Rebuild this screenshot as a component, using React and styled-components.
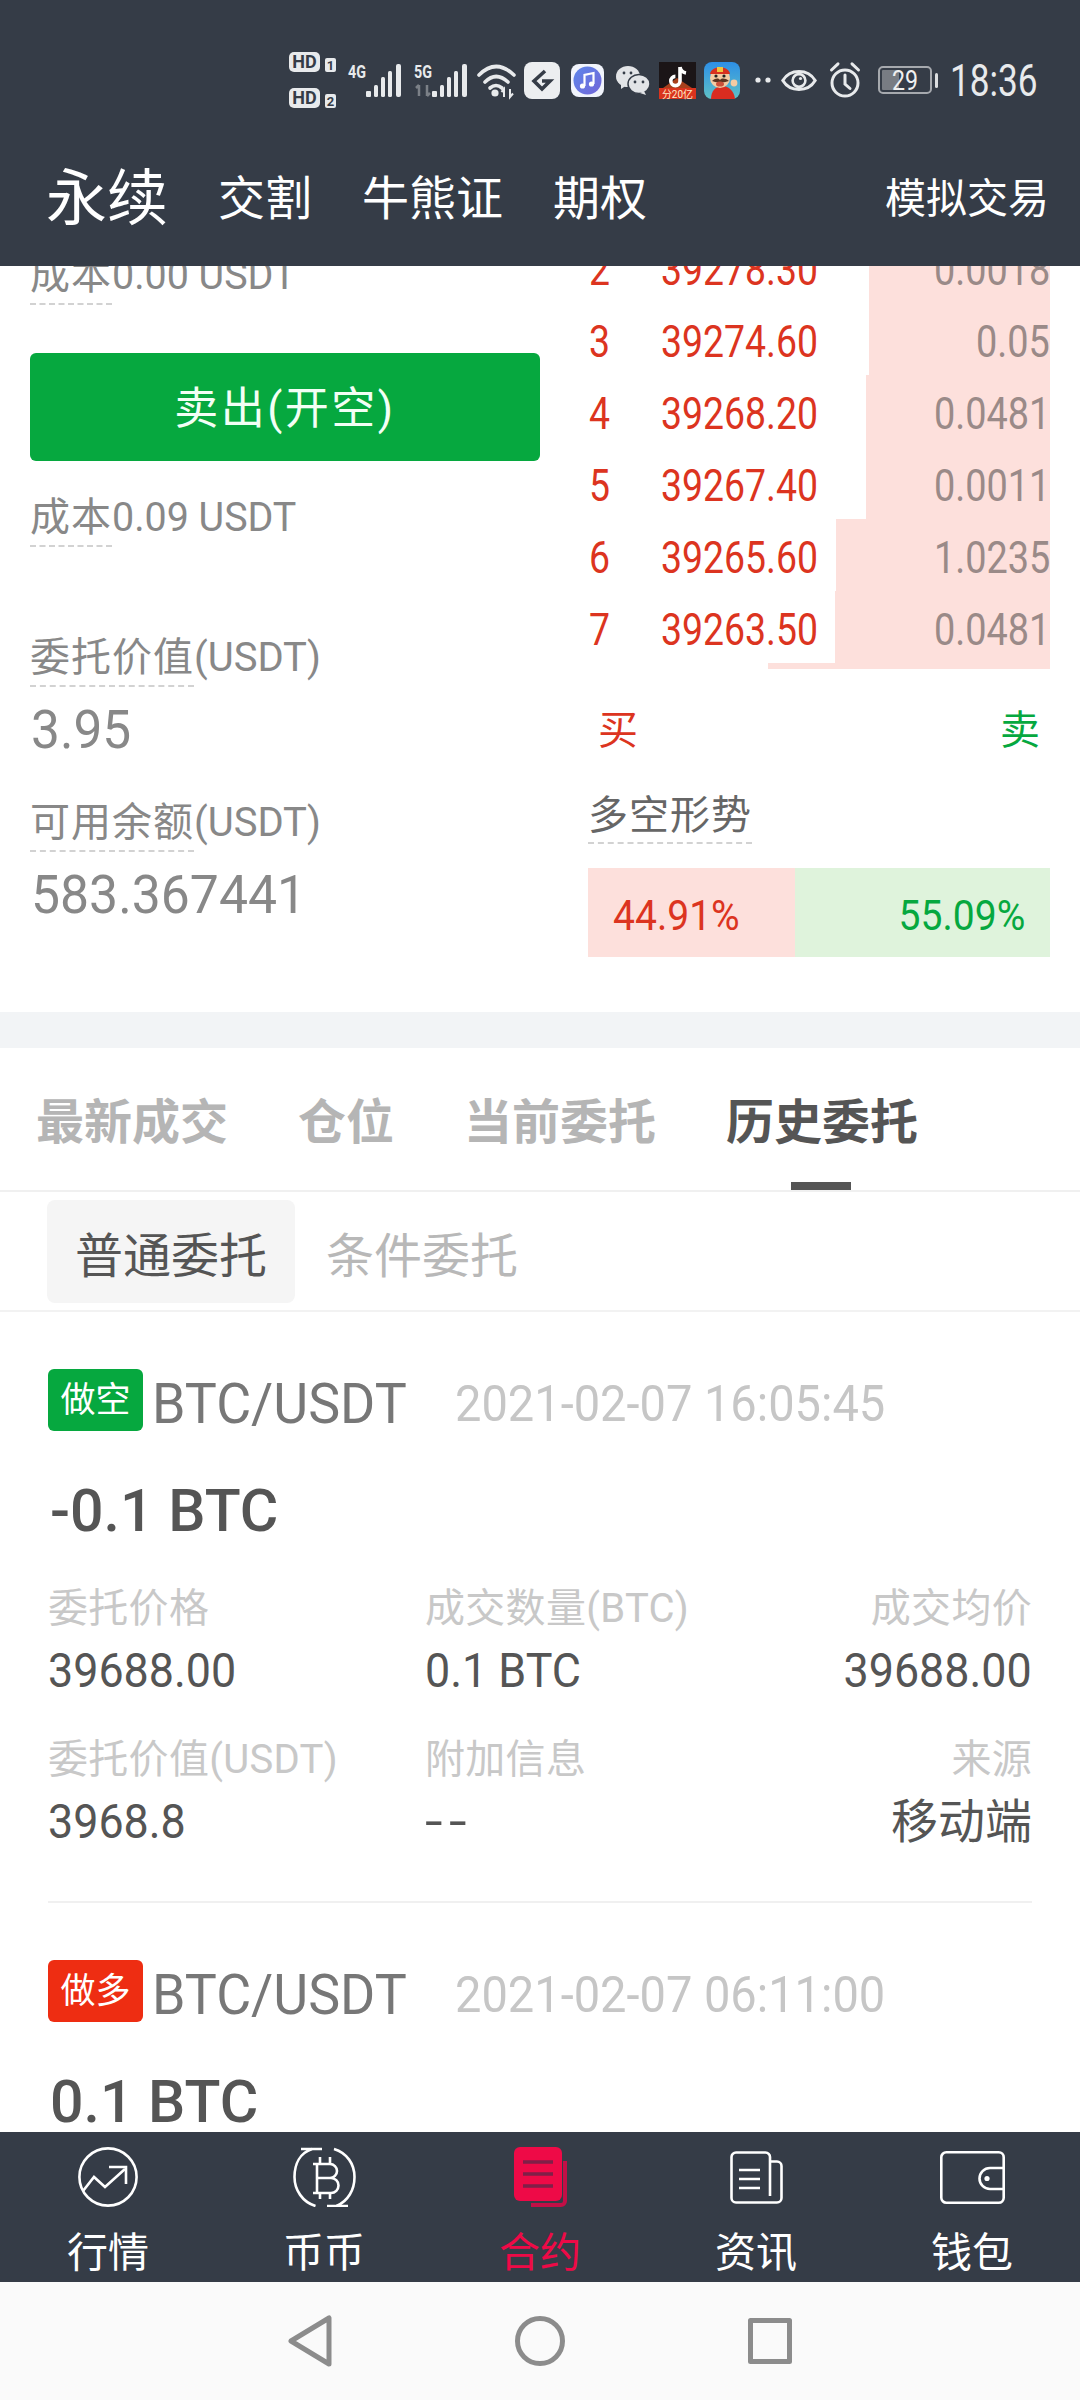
import React from "react";
import styled, { createGlobalStyle } from "styled-components";

const NUM = `"Roboto", "Noto Sans CJK SC", sans-serif`;
const DARK = "#353c47";
const RED = "#dc3420";
const GREEN = "#06a83f";
const PINK = "#fde0dc";

const Global = createGlobalStyle`
  html, body { margin: 0; padding: 0; background: #fff; }
  * { box-sizing: border-box; }
  body { font-family: ${NUM}; }
`;

const Page = styled.div`
  width: 1080px; height: 2400px; display: flex; flex-direction: column; overflow: hidden; background: #fff;
`;
const Header = styled.header`
  flex: 0 0 266px; background: ${DARK}; display: flex; flex-direction: column;
`;
const StatusBar = styled.div`
  flex: 0 0 160px; display: flex; align-items: center; justify-content: flex-end; padding-right: 42px; color: #e8eaec;
`;
const SBIcon = styled.svg`
  flex: none; display: block; overflow: visible; margin-left: ${p => p.$ml || 0}px;
  text { font-family: ${NUM}; }
`;
const Clock = styled.span`
  flex: 0 0 110px; margin: 2px -22px 0 12px; font-size: 44px; line-height: 44px; color: #e8eaec;
  transform: scaleX(.8); transform-origin: left center;
`;
const Cond = styled.span`
  display: inline-block; white-space: nowrap; transform: scaleX(${p => p.$s}); transform-origin: ${p => p.$end ? "right" : "left"} center;
`;
const TopNav = styled.nav`
  flex: 1; display: flex; align-items: center; gap: 50px; padding: 0 31px 29px 46px; color: #fff;
`;
const TopItem = styled.span`
  font-size: ${p => (p.$main ? 61 : 47)}px; line-height: 66px; white-space: nowrap;
`;
const TopRight = styled.span`
  margin-left: auto; font-size: 41px; line-height: 50px;
`;

const Scroller = styled.main`
  flex: 0 0 1866px; overflow: hidden;
`;
const Trade = styled.section`
  margin-top: -35px; display: grid; grid-template-columns: 510px 462px; column-gap: 48px; padding: 0 30px 55px;
`;
const LeftCol = styled.div`
  display: flex; flex-direction: column; align-items: flex-start; padding-top: 17px; color: #888;
`;
const Cost = styled.div`
  font-size: 40px; line-height: 56px; height: 57px; margin-top: ${p => p.$mt || 0}px; white-space: nowrap;
`;
const Dashed = styled.span`
  display: inline-block; height: 57px; border-bottom: 2px dashed #d2d2d2; letter-spacing: ${p => p.$ls || 0}px;
`;
const SellButton = styled.button`
  width: 510px; height: 108px; margin-top: 48px; border: 0; border-radius: 6px; background: ${GREEN}; color: #f2fff5;
  font: 44px/104px ${NUM}; padding: 4px 0 0; letter-spacing: 2.5px;
`;
const Metric = styled.div`
  font-size: 53px; line-height: 60px; margin-top: 13px; color: #888; padding-left: 1px;
`;
const RightCol = styled.div`
  display: flex; flex-direction: column; align-items: stretch;
`;
const Book = styled.div`
  height: 438px; overflow: hidden;
`;
const BookRow = styled.div`
  position: relative; height: 72px; padding-top: 6px; display: flex; align-items: center; font-size: 44px; line-height: 66px; color: ${RED};
`;
const Depth = styled.i`
  position: absolute; top: 0; right: 0; bottom: 0; background: ${PINK};
`;
const Idx = styled.span`
  position: relative; flex: 0 0 73px; padding-left: 1px;
`;
const Qty = styled.span`
  position: relative; margin-left: auto; color: #9a8a88;
`;
const Price = styled.span`position: relative;`;
const BuySell = styled.div`
  margin-top: 34px; height: 60px; display: flex; justify-content: space-between; padding: 0 10px; font-size: 40px; line-height: 56px;
`;
const BSLabel = styled.span`color: ${p => (p.$sell ? GREEN : RED)};`;
const Trend = styled.div`
  margin-top: 24px; height: 57px; font-size: 40px; line-height: 58px; color: #666;
`;
const Ratio = styled.div`
  margin-top: 24px; height: 89px; display: flex; font-size: 42px; line-height: 95px;
`;
const RatioBuy = styled.div`
  flex: 0 0 207px; background: ${PINK}; color: ${RED}; padding-left: 25px;
`;
const RatioSell = styled.div`
  flex: 1; background: #dff3dc; color: ${GREEN}; text-align: right; padding-right: 25px;
`;
const Gap = styled.div`height: 36px; background: #f2f4f6;`;
const Tabs = styled.div`
  height: 144px; display: flex; gap: 70px; padding: 51px 0 0 36px; border-bottom: 2px solid #f0f0f0;
`;
const Tab = styled.div`
  position: relative; height: 91px; font-size: 48px; line-height: 48px; font-weight: 700; color: ${p => (p.$on ? "#555" : "#b5b5b5")}; white-space: nowrap;
`;
const TabMark = styled.i`
  position: absolute; left: 50%; margin-left: -31px; bottom: 0; width: 60px; height: 8px; background: #555;
`;
const SubTabs = styled.div`
  height: 120px; display: flex; gap: 3px; align-items: center; padding-left: 47px; border-bottom: 2px solid #f2f2f2;
`;
const SubTab = styled.div`
  height: 103px; padding: 10px 28px 0; border-radius: 8px; font-size: 48px; line-height: 93px;
  background: ${p => (p.$on ? "#f5f5f5" : "transparent")}; color: ${p => (p.$on ? "#555" : "#b8b8b8")};
`;
const Card = styled.article`
  margin: 0 48px; padding: 57px 0 55px; border-bottom: ${p => (p.$last ? "0" : "2px solid #f0f0f0")};
`;
const CardHead = styled.div`display: flex; align-items: flex-start; height: 62px;`;
const Badge = styled.span`
  flex: 0 0 95px; height: 62px; border-radius: 6px; background: ${p => p.$c}; color: #fff; font-size: 35px; line-height: 63px; text-align: center;
`;
const Pair = styled.span`
  flex: 0 0 253px; margin-left: 9px; font-size: 56px; line-height: 70px; color: #777;
`;
const Stamp = styled.span`
  margin-left: 38px; font-size: 50px; line-height: 70px; color: #c6c6c6;
`;
const Amount = styled.div`
  margin-top: 45px; font-size: 59px; line-height: 70px; font-weight: 500; color: #555; padding-left: 2px;
`;
const Fields = styled.div`
  display: grid; grid-template-columns: 377px 306px 1fr; row-gap: 40px; margin-top: 38px;
`;
const Field = styled.div`text-align: ${p => (p.$end ? "right" : "left")};`;
const FLabel = styled.div`
  font-size: 40px; line-height: 50px; height: 48px; color: #c8c8c8; letter-spacing: .3px; white-space: nowrap;
`;
const FValue = styled.div`
  margin-top: 15px; font-size: 49px; line-height: 48px; color: #555; white-space: nowrap;
`;
const FCn = styled.span`font-size: 47px;`;
const Dash = styled.span`letter-spacing: 5px; display: inline-block; transform: scaleX(1.3); transform-origin: left center;`;

const TabBar = styled.nav`
  flex: 0 0 150px; background: ${DARK}; display: flex;
`;
const TabItem = styled.div`
  flex: 1; display: flex; flex-direction: column; align-items: center; color: ${p => (p.$on ? "#ee0a47" : "#fff")};
`;
const IconBox = styled.div`
  height: 60px; margin-top: 15px; display: flex; align-items: center; justify-content: center;
`;
const TabIcon = styled.svg`display: block; flex: none;`;
const TabText = styled.span`
  margin-top: 21px; font-size: 41px; line-height: 50px;
`;
const SysNav = styled.div`
  flex: 0 0 118px; background: #fafafa; display: flex; justify-content: center; align-items: center; gap: 183px;
`;

const L = "#e8eaec";

const Sim = () => (
  <SBIcon width="48" height="56" viewBox="0 0 48 56">
    <rect x="0" y="0" width="31" height="20" rx="5" fill={L} />
    <text x="15.5" y="16" textAnchor="middle" fontSize="18" fontWeight="700" fill={DARK}>HD</text>
    <rect x="36" y="6" width="11" height="14" rx="2" fill={L} />
    <text x="41.5" y="18" textAnchor="middle" fontSize="13" fontWeight="700" fill={DARK}>1</text>
    <rect x="0" y="36" width="31" height="20" rx="5" fill={L} />
    <text x="15.5" y="52" textAnchor="middle" fontSize="18" fontWeight="700" fill={DARK}>HD</text>
    <rect x="36" y="42" width="11" height="14" rx="2" fill={L} />
    <text x="41.5" y="54" textAnchor="middle" fontSize="13" fontWeight="700" fill={DARK}>2</text>
  </SBIcon>
);
const Bars = () => (
  <g fill={L}>
    <rect x="0" y="27" width="5" height="6" rx="1" />
    <rect x="8" y="21" width="4" height="12" rx="1.5" />
    <rect x="15" y="13" width="4" height="20" rx="1.5" />
    <rect x="22" y="7" width="4" height="26" rx="1.5" />
    <rect x="30" y="0" width="5" height="33" rx="2" />
  </g>
);
const Signal = ({ label, ml, arrows }) => (
  <SBIcon $ml={ml} width="54" height="34" viewBox="0 0 54 34">
    <text x="0" y="15" fontSize="18" fontWeight="700" fill={L} textLength="18" lengthAdjust="spacingAndGlyphs">{label}</text>
    {arrows && <path d="M5 33V22M2 25l3-3M13 22v11M13 33l3-3" stroke="#7b8087" strokeWidth="2.5" fill="none" />}
    <g transform="translate(18 1)"><Bars /></g>
  </SBIcon>
);
const Wifi = () => (
  <SBIcon $ml={9} width="39" height="35" viewBox="0 0 39 35">
    <g fill="none" stroke={L} strokeWidth="3.6" strokeLinecap="round">
      <path d="M2 12Q19-5 37 12" />
      <path d="M8 19Q19 8 31 19" />
      <path d="M13 25Q19 20 25 25" />
    </g>
    <circle cx="18" cy="30" r="3.6" fill={L} />
    <path d="M27 34V26l-2.5 3M33 26v8l3-3.5" stroke={L} strokeWidth="2" fill="none" />
  </SBIcon>
);
const GApp = () => (
  <SBIcon $ml={8} width="36" height="37" viewBox="0 0 36 37">
    <rect width="36" height="37" rx="8" fill="#eceef0" />
    <path d="M21 9L10 19l8 8 8-8h-8" fill="none" stroke={DARK} strokeWidth="3.6" />
  </SBIcon>
);
const Music = () => (
  <SBIcon $ml={11} width="33" height="33" viewBox="0 0 33 33">
    <defs>
      <linearGradient id="mus" x1="0" y1="0" x2="1" y2="1">
        <stop offset="0" stopColor="#5d86ea" /><stop offset="1" stopColor="#7266d8" />
      </linearGradient>
    </defs>
    <rect width="33" height="33" rx="8" fill="#f1f4fc" />
    <circle cx="16.5" cy="16.5" r="14" fill="url(#mus)" />
    <path d="M13.5 22V11l9-2v11" fill="none" stroke="#fff" strokeWidth="2.2" />
    <circle cx="11.5" cy="22" r="2.6" fill="#fff" /><circle cx="20.5" cy="20" r="2.6" fill="#fff" />
  </SBIcon>
);
const WeChat = () => (
  <SBIcon $ml={12} width="34" height="29" viewBox="0 0 34 29">
    <ellipse cx="12" cy="10.5" rx="12" ry="10.5" fill="#e2e4e7" />
    <path d="M5 17l0 6 6-4z" fill="#e2e4e7" />
    <ellipse cx="23" cy="18" rx="11" ry="9.5" fill="#e2e4e7" stroke={DARK} strokeWidth="1.5" />
    <path d="M28 25l2 4-6-2z" fill="#e2e4e7" />
    <circle cx="8" cy="7" r="1.4" fill={DARK} /><circle cx="15" cy="7" r="1.4" fill={DARK} />
    <circle cx="19" cy="16" r="1.4" fill={DARK} /><circle cx="27" cy="16" r="1.4" fill={DARK} />
  </SBIcon>
);
const TikTok = () => (
  <SBIcon $ml={9} width="37" height="37" viewBox="0 0 37 37">
    <rect width="37" height="37" fill="#1b1517" />
    <polygon points="4,26 18,16 33,26" fill="#a8401c" />
    <rect y="26" width="37" height="11" fill="#d9331d" />
    <path d="M21 5v14a4.6 4.6 0 1 1-4.6-4.6M21 5c.6 3.5 3 5.500 6 6" fill="none" stroke="#fff" strokeWidth="3.6" />
    <text x="18.5" y="35.500" textAnchor="middle" fontSize="10" fill="#ffe9c8">分20亿</text>
  </SBIcon>
);
const Game = () => (
  <SBIcon $ml={8} width="36" height="37" viewBox="0 0 36 37">
    <defs>
      <linearGradient id="gm" x1="0" y1="0" x2="0" y2="1">
        <stop offset="0" stopColor="#2d8fe6" /><stop offset="1" stopColor="#5fc1c6" />
      </linearGradient>
    </defs>
    <rect width="36" height="37" rx="8" fill="url(#gm)" />
    <path d="M7 37c0-8 5-13 11-13s12 4 13 13z" fill="#d92c20" />
    <ellipse cx="16" cy="16" rx="10" ry="10" fill="#f4cba3" />
    <path d="M6 12C7 3 25 3 26 12z" fill="#d8301f" />
    <rect x="13" y="5" width="6" height="5" fill="#f2c33d" />
    <path d="M8 19c4-3 6-3 8-1 2-2 5-2 9 1-4 1-6 2-9 1-2 1-5 0-8-1z" fill="#5b3320" />
    <ellipse cx="16" cy="22" rx="4" ry="2.600" fill="#c9503a" />
    <circle cx="12" cy="14" r="1.6" fill="#222" /><circle cx="20" cy="14" r="1.6" fill="#222" />
    <circle cx="30" cy="21" r="3.4" fill="#f4cba3" />
  </SBIcon>
);
const Dots = () => (
  <SBIcon $ml={15} width="16" height="6" viewBox="0 0 16 6">
    <circle cx="3" cy="3" r="2.6" fill={L} /><circle cx="13" cy="3" r="2.6" fill={L} />
  </SBIcon>
);
const Eye = () => (
  <SBIcon $ml={10} width="36" height="27" viewBox="0 0 36 27">
    <path d="M1.800 13.500C9 1.500 27 1.500 34.200 13.500 27 25.500 9 25.500 1.800 13.500Z" fill="none" stroke={L} strokeWidth="3" />
    <circle cx="18" cy="13.500" r="6.400" fill="none" stroke={L} strokeWidth="2.600" />
    <circle cx="19.500" cy="11.500" r="1.600" fill={L} />
  </SBIcon>
);
const Alarm = () => (
  <SBIcon $ml={12} width="32" height="36" viewBox="0 0 32 36">
    <g fill="none" stroke={L} strokeWidth="3" strokeLinecap="round">
      <circle cx="16" cy="21" r="13" />
      <path d="M16 13v9l5 4.500" />
      <path d="M2.500 8L9 1.800M29.500 8L23 1.800" />
    </g>
  </SBIcon>
);
const Battery = () => (
  <SBIcon $ml={17} width="60" height="28" viewBox="0 0 60 28">
    <rect x="1" y="1" width="52" height="26" rx="4" fill="none" stroke="#a6a9ae" strokeWidth="2" />
    <rect x="4" y="4" width="17" height="20" rx="1" fill="#787c83" />
    <text x="27" y="24" textAnchor="middle" fontSize="28" fill="#f0f0f0" textLength="26" lengthAdjust="spacingAndGlyphs">29</text>
    <rect x="57" y="7" width="3" height="15" rx="1.500" fill="#dcdee0" />
  </SBIcon>
);

const IcTrend = () => (
  <TabIcon width="60" height="60" viewBox="0 0 60 60" fill="none" stroke="#fff" strokeWidth="2.6">
    <circle cx="30" cy="30" r="28.600" />
    <path d="M5 44l11-14 11 10 20-18" />
    <path d="M31 20h17v17" />
  </TabIcon>
);
const IcCoin = () => (
  <TabIcon width="63" height="60" viewBox="0 0 63 60" fill="none" stroke="#fff" strokeWidth="2.6">
    <path d="M19 2C7 6 1.500 17 1.500 30c0 13 8 25 21 29" />
    <path d="M41 2c13 4 20.500 15 20.500 28 0 13-6.500 24-18 29" />
    <path d="M8 2h21M34 59h21" />
    <path d="M20 17h17a7 7 0 0 1 0 14H24M24 17v28M24 31h14a7.500 7.500 0 0 1 0 15H20" />
    <path d="M27 10v7M37 10v7M27 46v6M37 46v6" />
  </TabIcon>
);
const IcContract = () => (
  <TabIcon width="53" height="60" viewBox="0 0 53 60" fill="none">
    <path d="M51 14v40a4 4 0 0 1-4 4H17" stroke="#c20f46" strokeWidth="4" />
    <rect width="48" height="54" rx="6" fill="#ee0a47" />
    <path d="M9 15h30M9 27h30M9 39h30" stroke="#7f1f48" strokeWidth="3.400" />
  </TabIcon>
);
const IcNews = () => (
  <TabIcon width="53" height="53" viewBox="0 0 53 53" fill="none" stroke="#fff" strokeWidth="2.6">
    <path d="M40 45V6a4.500 4.500 0 0 0-4.500-4.500H6A4.500 4.500 0 0 0 1.500 6v41A4.500 4.500 0 0 0 6 51.500h41a4.500 4.500 0 0 0 4.500-4.500V15a4.500 4.500 0 0 0-4.500-4.500h-7" />
    <path d="M9 19h21M9 28h21M9 37h21" />
  </TabIcon>
);
const IcWallet = () => (
  <TabIcon width="65" height="53" viewBox="0 0 65 53" fill="none" stroke="#fff" strokeWidth="2.6">
    <rect x="1.300" y="1.300" width="62.400" height="50.400" rx="5" />
    <path d="M64 17H50a10.500 10.500 0 0 0 0 21h14" />
    <circle cx="47" cy="27.500" r="2.600" fill="#fff" stroke="none" />
  </TabIcon>
);

const book = [
  ["2", "39278.30", "0.0018", 181],
  ["3", "39274.60", "0.05", 181],
  ["4", "39268.20", "0.0481", 184],
  ["5", "39267.40", "0.0011", 184],
  ["6", "39265.60", "1.0235", 214],
  ["7", "39263.50", "0.0481", 215],
  ["", "", "", 282],
];
const tabs = [
  ["行情", <IcTrend key="a" />],
  ["币币", <IcCoin key="b" />],
  ["合约", <IcContract key="c" />, true],
  ["资讯", <IcNews key="d" />],
  ["钱包", <IcWallet key="e" />],
];

const renderValue = (v, cn, end) => {
  if (cn) return <FCn>{v}</FCn>;
  if (v === "--") return <Dash>{v}</Dash>;
  return <Cond $s={0.915} $end={end}>{v}</Cond>;
};

const Order = ({ tag, color, time, amount, last, fields }) => (
  <Card $last={last}>
    <CardHead>
      <Badge $c={color}>{tag}</Badge>
      <Pair><Cond $s={0.96}>BTC/USDT</Cond></Pair>
      <Stamp><Cond $s={0.94}>{time}</Cond></Stamp>
    </CardHead>
    <Amount>{amount}</Amount>
    {fields && (
      <Fields>
        {fields.map(([l, v, cn], i) => (
          <Field key={l} $end={i % 3 === 2}>
            <FLabel>{l}</FLabel>
            <FValue>{renderValue(v, cn, i % 3 === 2)}</FValue>
          </Field>
        ))}
      </Fields>
    )}
  </Card>
);

export default function App() {
  return (
    <Page>
      <Global />
      <Header>
        <StatusBar>
          <Sim />
          <Signal label="4G" ml={11} />
          <Signal label="5G" ml={12} arrows />
          <Wifi /><GApp /><Music /><WeChat /><TikTok /><Game /><Dots /><Eye /><Alarm /><Battery />
          <Clock>18:36</Clock>
        </StatusBar>
        <TopNav>
          <TopItem $main>永续</TopItem>
          <TopItem>交割</TopItem>
          <TopItem>牛熊证</TopItem>
          <TopItem>期权</TopItem>
          <TopRight>模拟交易</TopRight>
        </TopNav>
      </Header>
      <Scroller>
        <Trade>
          <LeftCol>
            <Cost><Dashed $ls={1}>成本</Dashed><Cond $s={0.985}>0.00 USDT</Cond></Cost>
            <SellButton>卖出(开空)</SellButton>
            <Cost $mt={29}><Dashed $ls={1}>成本</Dashed><Cond $s={0.985}>0.09 USDT</Cond></Cost>
            <Cost $mt={83}><Dashed $ls={1}>委托价值</Dashed>(USDT)</Cost>
            <Metric><Cond $s={0.97}>3.95</Cond></Metric>
            <Cost $mt={35}><Dashed $ls={1}>可用余额</Dashed>(USDT)</Cost>
            <Metric><Cond $s={0.975}>583.367441</Cond></Metric>
          </LeftCol>
          <RightCol>
            <Book>
              {book.map(([n, p, q, w], i) => (
                <BookRow key={i}>
                  <Depth style={{ width: w }} />
                  <Idx><Cond $s={0.85}>{n}</Cond></Idx>
                  <Price><Cond $s={0.85}>{p}</Cond></Price>
                  <Qty><Cond $s={0.86} $end>{q}</Cond></Qty>
                </BookRow>
              ))}
            </Book>
            <BuySell><BSLabel>买</BSLabel><BSLabel $sell>卖</BSLabel></BuySell>
            <Trend><Dashed $ls={1}>多空形势</Dashed></Trend>
            <Ratio>
              <RatioBuy><Cond $s={0.93}>44.91%</Cond></RatioBuy>
              <RatioSell><Cond $s={0.93} $end>55.09%</Cond></RatioSell>
            </Ratio>
          </RightCol>
        </Trade>
        <Gap />
        <Tabs>
          <Tab>最新成交</Tab>
          <Tab>仓位</Tab>
          <Tab>当前委托</Tab>
          <Tab $on>历史委托<TabMark /></Tab>
        </Tabs>
        <SubTabs>
          <SubTab $on>普通委托</SubTab>
          <SubTab>条件委托</SubTab>
        </SubTabs>
        <Order tag="做空" color={GREEN} time="2021-02-07 16:05:45" amount="-0.1 BTC"
          fields={[
            ["委托价格", "39688.00"], ["成交数量(BTC)", "0.1 BTC"], ["成交均价", "39688.00"],
            ["委托价值(USDT)", "3968.8"], ["附加信息", "--"], ["来源", "移动端", true],
          ]} />
        <Order tag="做多" color="#ee2d12" time="2021-02-07 06:11:00" amount="0.1 BTC" last />
      </Scroller>
      <TabBar>
        {tabs.map(([t, ic, on]) => (
          <TabItem key={t} $on={on}>
            <IconBox>{ic}</IconBox>
            <TabText>{t}</TabText>
          </TabItem>
        ))}
      </TabBar>
      <SysNav>
        <TabIcon width="44" height="52" viewBox="0 0 44 52" fill="none" stroke="#8c8c8c" strokeWidth="5" strokeLinejoin="round">
          <path d="M41 3v46L3 26z" />
        </TabIcon>
        <TabIcon width="50" height="50" viewBox="0 0 50 50" fill="none" stroke="#8c8c8c" strokeWidth="5">
          <circle cx="25" cy="25" r="22.500" />
        </TabIcon>
        <TabIcon width="44" height="46" viewBox="0 0 44 46" fill="none" stroke="#8c8c8c" strokeWidth="5" strokeLinejoin="round">
          <rect x="2.500" y="2.500" width="39" height="41" />
        </TabIcon>
      </SysNav>
    </Page>
  );
}
